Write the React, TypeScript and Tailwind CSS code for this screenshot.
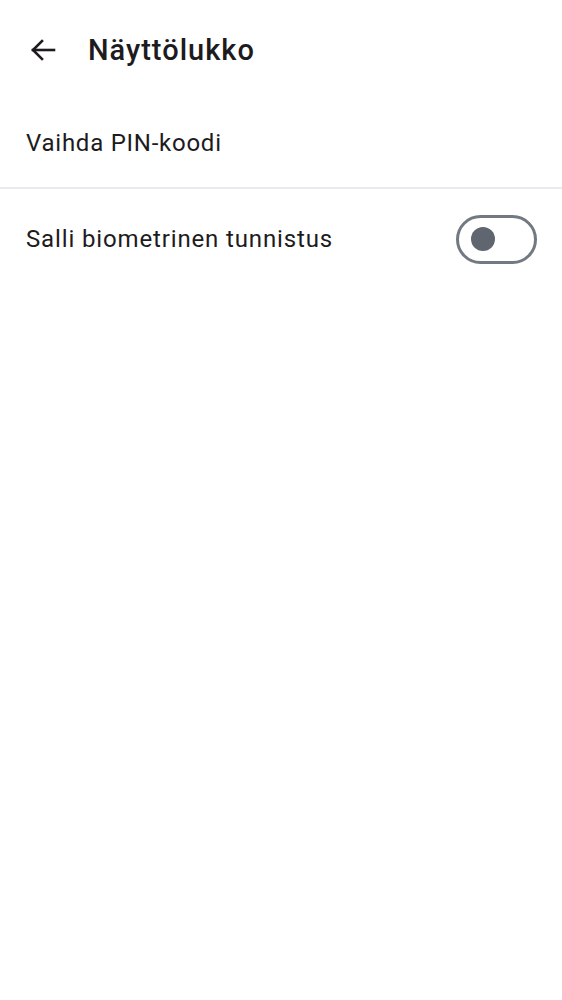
export default function App() {
  return (
    <div className="w-[562px] h-[1000px] bg-white" style={{ fontFamily: 'Roboto, "Noto Sans", sans-serif' }}>
      <div className="flex items-center h-[100px] pl-[30px]">
        <svg width="26" height="24" viewBox="0 0 26 24" fill="none" stroke="#1d1b20" strokeWidth="2.6" strokeLinecap="square">
          <path d="M3 12 H24" />
          <path d="M12 3 L3 12 L12 21" strokeLinejoin="miter" />
        </svg>
        <div className="ml-[32px] text-[29px] font-medium text-[#1d1b20] leading-none tracking-[1px]">Näyttölukko</div>
      </div>
      <div className="flex items-center h-[86px] px-[26px]">
        <div className="text-[24px] text-[#1d1b20] tracking-[0.75px]">Vaihda PIN-koodi</div>
      </div>
      <div className="h-[2px] bg-[#e9e9ee] mt-[1px]" />
      <div className="flex items-center justify-between h-[100px] pl-[26px] pr-[25px]">
        <div className="text-[24px] text-[#1d1b20] tracking-[0.86px]">Salli biometrinen tunnistus</div>
        <div className="w-[81px] h-[49px] rounded-full border-[3px] border-[#737982] flex items-center pl-[12px]">
          <div className="w-[24px] h-[24px] rounded-full bg-[#5f6670]" />
        </div>
      </div>
    </div>
  );
}
